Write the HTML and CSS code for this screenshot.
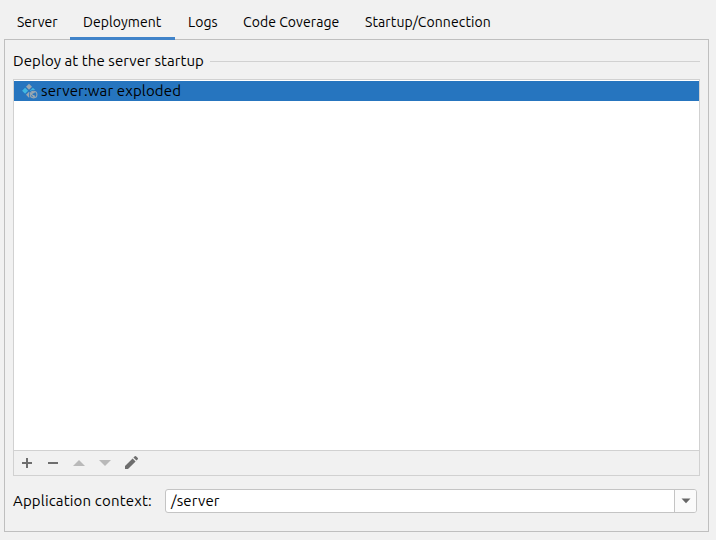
FILE: index.html
```
<!DOCTYPE html>
<html lang="en">
<head>
<meta charset="utf-8">
<title>Deployment</title>
<link rel="stylesheet" href="styles.css">
</head>
<body>
<nav class="tabs">
  <div class="tab tab-server"><span>Server</span></div>
  <div class="tab tab-deployment active"><span>Deployment</span></div>
  <div class="tab tab-logs"><span>Logs</span></div>
  <div class="tab tab-coverage"><span>Code Coverage</span></div>
  <div class="tab tab-startup"><span>Startup/Connection</span></div>
</nav>
<main class="panel">
  <div class="heading"><span class="heading-text">Deploy at the server startup</span><span class="rule"></span></div>
  <section class="list">
    <div class="items">
      <div class="item">
        <svg class="artifact" width="16" height="16" viewBox="0 0 16 16">
          <path fill="#9aa7b0" d="M7 .7 10 3.7 7 6.7 4 3.7z"/>
          <path fill="#40b6e0" d="M3.1 4.7 6.1 7.7 3.1 10.7 .1 7.7zM10.9 4.7l2.3 2.3q-3.2-.5-4.8 1.1l-.5-.4z"/>
          <path fill="#9aa7b0" d="M7 8.7l.5.5q-1 2.4-.1 4.9L7 14.7l-3-3z"/>
          <circle cx="11.6" cy="11.6" r="3.3" fill="#2675bf" stroke="#9aa7b0" stroke-width="1.1"/>
          <path fill="#9aa7b0" d="M8.2 11l2-2.4 2.9.1-.8 1.6-1.6.3-.3 1.2 2.1.4.6 1.2-1.3 1.3-1.6-1.6z"/>
        </svg>
        <span class="item-text">server:war exploded</span>
      </div>
    </div>
    <div class="toolbar">
      <svg width="16" height="16" viewBox="0 0 16 16"><path fill="#6e6e6e" d="M7 3h2v4h4v2H9v4H7V9H3V7h4z"/></svg>
      <svg width="16" height="16" viewBox="0 0 16 16"><path fill="#6e6e6e" d="M3 7h10v2H3z"/></svg>
      <svg width="16" height="16" viewBox="0 0 16 16"><path fill="#b9b9b9" d="M8 5l6 6H2z"/></svg>
      <svg width="16" height="16" viewBox="0 0 16 16"><path fill="#b9b9b9" d="M2 5h12l-6 6z"/></svg>
      <svg width="16" height="16" viewBox="0 0 16 16"><path fill="#6e6e6e" d="M9.6 3.4l3 3L5 14H2v-3zM10.4 2.6 11.8 1.2q.6-.5 1.2 0L14.8 3q.5.6 0 1.2l-1.4 1.4z"/></svg>
    </div>
  </section>
  <div class="context">
    <label class="context-label" for="context">Application context:</label>
    <div class="combo" id="context">
      <div class="value"><span>/server</span></div>
      <div class="arrow"><svg width="10" height="6" viewBox="0 0 10 6"><path fill="#666" d="M.5.5h9L5 5.2z"/></svg></div>
    </div>
  </div>
</main>
</body>
</html>
```
FILE: styles.css
```
* { box-sizing: border-box; }
body {
  margin: 0;
  height: 540px;
  padding: 5px 7px 8px 4px;
  display: flex;
  flex-direction: column;
  background: #f1f1f1;
  color: #000;
  font: 14px/20px Ubuntu, "Noto Sans", sans-serif;
  white-space: nowrap;
  overflow: hidden;
}
svg { display: block; flex: none; }
.tabs { display: flex; height: 35px; margin-bottom: -1px; z-index: 1; letter-spacing: 0.07px; }
.tab { padding: 7px 0 0 13px; border-bottom: 3px solid transparent; }
.tab.active { border-bottom-color: #4083c9; }
.tab-server { width: 66px; letter-spacing: 0; }
.tab-deployment { width: 105px; }
.tab-logs { width: 55px; }
.tab-coverage { width: 122px; }
.tab-startup { width: 152px; letter-spacing: 0.12px; }
.panel {
  flex: 1;
  border: 1px solid #bfbfbf;
  padding: 11px 8px 0;
  font-size: 15px;
  letter-spacing: 0.08px;
}
.heading { display: flex; align-items: center; height: 20px; }
.heading-text { width: 197px; }
.rule { flex: 1; height: 1px; background: #d1d1d1; }
.list { height: 397px; margin-top: 8px; border: 1px solid #d1d1d1; display: flex; flex-direction: column; }
.items { flex: 1; padding-top: 1px; background: #fff; }
.item { display: flex; align-items: center; height: 20px; padding-left: 8px; background: #2675bf; }
.artifact { margin-right: 3px; }
.item-text { letter-spacing: 0.14px; }
.toolbar { display: flex; gap: 10px; height: 25px; padding: 4px 5px; border-top: 1px solid #d1d1d1; }
.context { display: flex; align-items: center; height: 24px; margin-top: 13px; }
.context-label { width: 152px; letter-spacing: 0.17px; }
.combo { display: flex; width: 532px; height: 24px; border: 1px solid #c4c4c4; border-radius: 3px; background: #fff; overflow: hidden; }
.value { flex: 1; padding: 1px 0 0 5px; letter-spacing: 0.17px; }
.arrow { width: 22px; border-left: 1px solid #c4c4c4; background: #fafafa; display: flex; align-items: center; justify-content: center; }
```
